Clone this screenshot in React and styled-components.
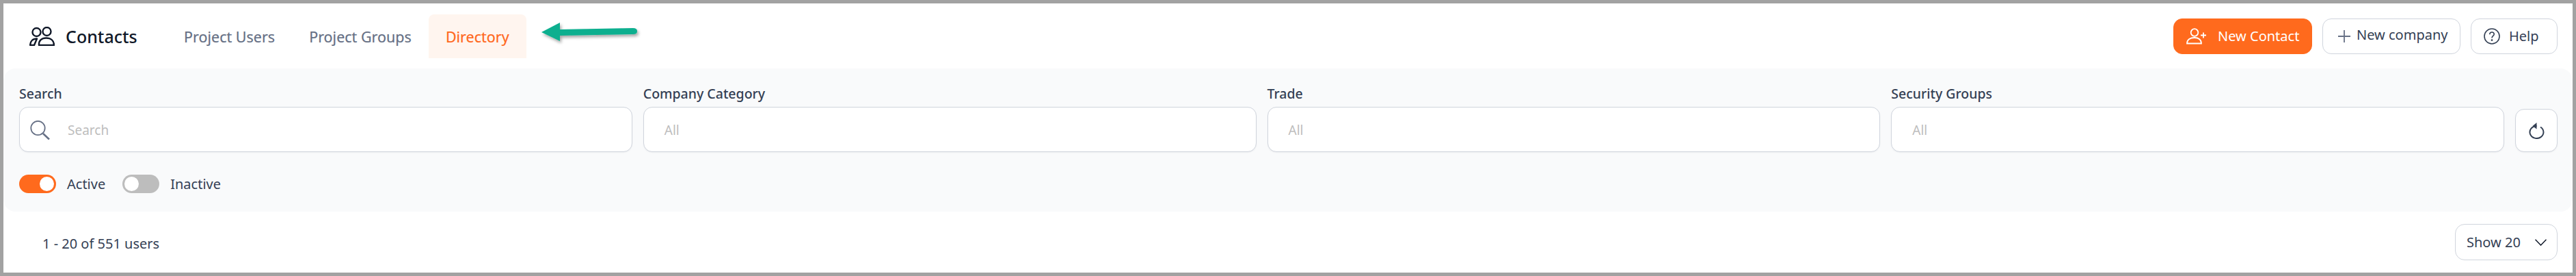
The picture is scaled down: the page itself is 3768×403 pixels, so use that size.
import React from "react";
import styled, { createGlobalStyle } from "styled-components";

const Global = createGlobalStyle`
  html, body { margin: 0; padding: 0; background: #fff; }
  * { box-sizing: border-box; }
  body { font-family: "Noto Sans", "Open Sans", sans-serif; color: #2e3a55; }
`;

const Frame = styled.div`
  width: 3768px;
  height: 403px;
  border: 5px solid #a2a2a2;
  background: #fff;
  display: flex;
  flex-direction: column;
`;

const Header = styled.header`
  height: 95px;
  flex: none;
  display: flex;
  align-items: center;
  padding: 0 22px 0 38px;
`;

const Brand = styled.div`
  display: flex;
  align-items: center;
  gap: 16px;
  font-size: 25px;
  font-weight: 500;
  color: #101828;
  width: 201px;
  flex: none;
`;

const Tabs = styled.nav`
  display: flex;
  align-items: stretch;
  height: 64px;
`;

const Tab = styled.div`
  display: flex;
  align-items: center;
  padding: 2px 25px 0;
  font-size: 21.5px;
  font-weight: 400;
  -webkit-text-stroke: 0.2px currentColor;
  border-radius: 8px 8px 0 0;
  color: ${(p) => (p.$active ? "#ff681d" : "#667085")};
  background: ${(p) => (p.$active ? "#fff5ef" : "transparent")};
`;

const Arrow = styled.svg`
  margin: -10px 0 0 22px;
  flex: none;
  overflow: visible;
`;

const Actions = styled.div`
  margin-left: auto;
  display: flex;
  gap: 15px;
`;

const Button = styled.button`
  height: 52px;
  width: ${(p) => p.$w}px;
  padding: 0 0 0 ${(p) => p.$pad}px;
  display: flex;
  align-items: center;
  gap: ${(p) => p.$gap}px;
  font-family: inherit;
  font-size: 20px;
  font-weight: 400;
  border-radius: 13px;
  border: 1px solid ${(p) => (p.$primary ? "#ff6a1d" : "#d0d5dd")};
  background: ${(p) => (p.$primary ? "#ff6a1d" : "#fff")};
  color: ${(p) => (p.$primary ? "#fff" : "#344054")};
`;

const ButtonLabel = styled.span`
  position: relative;
  top: ${(p) => p.$lift || 0}px;
`;

const Panel = styled.section`
  height: 209px;
  flex: none;
  background: #f9fafb;
  border-radius: 18px;
  padding: 24px 22px 0 23px;
`;

const Filters = styled.div`
  display: flex;
  gap: 16px;
  align-items: flex-end;
`;

const Field = styled.div`
  flex: 1 1 0;
  min-width: 0;
`;

const Label = styled.div`
  height: 25px;
  line-height: 25px;
  margin-bottom: 7px;
  font-size: 19.5px;
  font-weight: 500;
  color: #344054;
`;

const Control = styled.div`
  height: 66px;
  background: #fff;
  border: 1px solid #d0d5dd;
  border-radius: 13px;
  box-shadow: 0 1px 2px rgba(16, 24, 40, 0.05);
  display: flex;
  align-items: center;
  padding: 2px 0 0 ${(p) => p.$pad}px;
  gap: 26px;
  font-size: 19px;
  color: #bdbdbd;
`;

const IconButton = styled.button`
  width: 62px;
  height: 63px;
  flex: none;
  display: flex;
  align-items: center;
  justify-content: center;
  padding: 0;
  background: #fff;
  border: 1px solid #d0d5dd;
  border-radius: 13px;
  box-shadow: 0 1px 2px rgba(16, 24, 40, 0.05);
`;

const Toggles = styled.div`
  display: flex;
  align-items: center;
  height: 27px;
  margin-top: 33px;
  font-size: 20px;
  font-weight: 400;
  color: #344054;
`;

const ToggleTrack = styled.span`
  width: 54px;
  height: 27px;
  border-radius: 14px;
  padding: 3px;
  display: flex;
  justify-content: ${(p) => (p.$on ? "flex-end" : "flex-start")};
  background: ${(p) => (p.$on ? "#ff6a1d" : "#bdbdbd")};
  margin-right: 16px;
`;

const ToggleKnob = styled.span`
  width: 21px;
  height: 21px;
  border-radius: 50%;
  background: #fff;
`;

const ToggleLabel = styled.span`
  margin-right: 25px;
`;

const Footer = styled.footer`
  flex: 1;
  display: flex;
  align-items: center;
  justify-content: space-between;
  padding: 8px 22px 8px 57px;
  font-size: 20px;
  color: #344054;
`;

const FooterCount = styled.span`
  margin-top: 3px;
`;

const ShowSelect = styled.div`
  width: 150px;
  height: 53px;
  border: 1px solid #d0d5dd;
  border-radius: 14px;
  display: flex;
  align-items: center;
  justify-content: space-between;
  padding: 0 15px 0 16px;
  font-size: 20px;
`;

const ContactsIcon = () => (
  <svg width="37" height="28" viewBox="0 0 37 28" fill="none" stroke="#101828" strokeWidth="2.4" strokeLinejoin="round" style={{ flex: "none" }}>
    <circle cx="10.5" cy="8" r="6" />
    <circle cx="25.5" cy="7" r="6" />
    <path d="M1.2 27 C1 21 5 17.5 11 17.5 L7 27 Z" />
    <path d="M14 27 C13.5 20 18 16.5 24.5 16.5 C31 16.5 36 20 36 27 Z" />
  </svg>
);

const ArrowIcon = () => (
  <Arrow width="140" height="29" viewBox="0 0 140 29">
    <defs>
      <filter id="as" x="-10%" y="-30%" width="120%" height="170%">
        <feDropShadow dx="2" dy="3" stdDeviation="2" floodColor="#000" floodOpacity="0.35" />
      </filter>
    </defs>
    <path d="M0 14 L27 0 V10 L134 8 Q140 8 140 12.5 Q140 17 134 17 L27 19 V27 Z" fill="#0aaf8f" filter="url(#as)" />
  </Arrow>
);

const SearchIcon = () => (
  <svg width="29" height="28" viewBox="0 0 29 28" fill="none" stroke="#667085" style={{ flex: "none" }}>
    <circle cx="11.5" cy="11" r="10.2" strokeWidth="1.8" />
    <path d="M19 19 L28 27.5" strokeWidth="2.6" />
  </svg>
);

const UserPlusIcon = () => (
  <svg width="30" height="24" viewBox="0 0 30 24" fill="none" stroke="#fff" strokeWidth="1.8" style={{ flex: "none" }}>
    <circle cx="12" cy="6.5" r="5.3" />
    <path d="M1 22.5 C1 16.5 6 14 12 14 C18 14 22 17 22 22.5 Z" />
    <path d="M21 10.5 H29 M25 6.5 V14.5" />
  </svg>
);

const PlusIcon = () => (
  <svg width="18" height="18" viewBox="0 0 18 18" stroke="#667085" strokeWidth="1.8" style={{ flex: "none" }}>
    <path d="M0 9 H18 M9 0 V18" />
  </svg>
);

const HelpIcon = () => (
  <svg width="24" height="24" viewBox="0 0 24 24" fill="none" stroke="#344054" strokeWidth="1.6" style={{ flex: "none" }}>
    <circle cx="12" cy="12" r="11" />
    <path d="M8.8 9.2 C8.8 7 10.4 6 12 6 C13.8 6 15.2 7.2 15.2 9 C15.2 11.4 12 11.6 12 14.5" />
    <circle cx="12" cy="17.6" r="0.6" fill="#344054" />
  </svg>
);

const ResetIcon = () => (
  <svg width="23" height="24" viewBox="0 0 23 24" fill="none" stroke="#344054" strokeWidth="2" style={{ flex: "none" }}>
    <path d="M11.5 5 A10 9 0 1 0 17 6.5" />
    <path d="M11.5 0 V9.5 L5.5 5 Z" fill="#344054" stroke="none" />
  </svg>
);

const ChevronIcon = () => (
  <svg width="17" height="10" viewBox="0 0 17 10" fill="none" stroke="#101828" strokeWidth="1.5" style={{ flex: "none" }}>
    <path d="M0.5 0.8 L8.5 9 L16.5 0.8" />
  </svg>
);

export default function App() {
  return (
    <>
      <Global />
      <Frame>
        <Header>
          <Brand>
            <ContactsIcon />
            <span>Contacts</span>
          </Brand>
          <Tabs>
            <Tab>Project Users</Tab>
            <Tab>Project Groups</Tab>
            <Tab $active>Directory</Tab>
          </Tabs>
          <ArrowIcon />
          <Actions>
            <Button $primary $w={203} $pad={18} $gap={16}>
              <UserPlusIcon />
              <span>New Contact</span>
            </Button>
            <Button $w={202} $pad={22} $gap={9}>
              <PlusIcon />
              <ButtonLabel $lift={-2}>New company</ButtonLabel>
            </Button>
            <Button $w={127} $pad={18} $gap={13}>
              <HelpIcon />
              <span>Help</span>
            </Button>
          </Actions>
        </Header>
        <Panel>
          <Filters>
            <Field>
              <Label>Search</Label>
              <Control $pad={15}>
                <SearchIcon />
                <span>Search</span>
              </Control>
            </Field>
            <Field>
              <Label>Company Category</Label>
              <Control $pad={30}>All</Control>
            </Field>
            <Field>
              <Label>Trade</Label>
              <Control $pad={30}>All</Control>
            </Field>
            <Field>
              <Label>Security Groups</Label>
              <Control $pad={30}>All</Control>
            </Field>
            <IconButton>
              <ResetIcon />
            </IconButton>
          </Filters>
          <Toggles>
            <ToggleTrack $on><ToggleKnob /></ToggleTrack>
            <ToggleLabel>Active</ToggleLabel>
            <ToggleTrack><ToggleKnob /></ToggleTrack>
            <span>Inactive</span>
          </Toggles>
        </Panel>
        <Footer>
          <FooterCount>1 - 20 of 551 users</FooterCount>
          <ShowSelect>
            <span>Show 20</span>
            <ChevronIcon />
          </ShowSelect>
        </Footer>
      </Frame>
    </>
  );
}
